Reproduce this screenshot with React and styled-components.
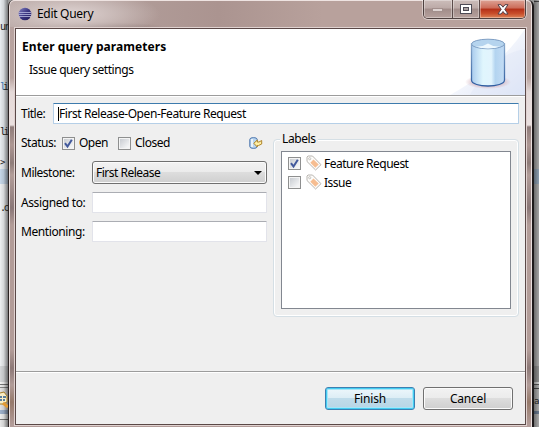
import React from 'react';
import styled, { createGlobalStyle } from 'styled-components';

const GlobalStyle = createGlobalStyle`
  * { box-sizing: border-box; }
  body { margin: 0; overflow: hidden; }
`;

const Desktop = styled.div`
  position: relative;
  width: 539px;
  height: 427px;
  overflow: hidden;
  display: grid;
  grid-template-columns: 8px 526px 5px;
  font: 12px/16px 'Noto Sans', 'Open Sans', sans-serif;
  color: #000;
  background: #999;
`;

const LeftStrip = styled.div`
  position: relative;
  background:
    linear-gradient(90deg, rgba(0,0,0,0) 0%, rgba(0,0,0,.1) 45%, rgba(0,0,0,.5) 100%),
    linear-gradient(#e9edf1 0 169px, #c7d8ea 169px 184px, #eef0f2 184px 366px, #d6d8da 366px 382px, #f4f4f4 382px 384px, #777 384px 385px, #ececec 385px 387px, #888 387px 388px, #e4e4e4 388px 410px, #9fb2cc 410px 414px, #eee 414px 419px, #777 419px 420px, #e8e8e8 420px);
`;

const RightStrip = styled.div`
  position: relative;
  background:
    linear-gradient(90deg, rgba(0,0,0,.35), rgba(0,0,0,0)),
    linear-gradient(#aaa 0 1px, #444 1px 2px, #a5a5a5 2px 169px, #8c9eb0 169px 184px, #a5a5a5 184px 366px, #8d8d8d 366px 382px, #ccc 382px 384px, #555 384px 385px, #aaa 385px 388px, #444 388px 389px, #aaa 389px 411px, #68788d 411px 414px, #aaa 414px);
`;

const CodeBit = styled.span`
  position: absolute;
  top: ${(p) => p.$y}px;
  left: ${(p) => p.$x ?? 0}px;
  font: ${(p) => p.$size ?? 11}px/14px 'DejaVu Sans Mono', monospace;
  letter-spacing: ${(p) => p.$ls ?? -2.6}px;
  color: ${(p) => p.$color || '#222'};
`;

const Frame = styled.div`
  position: relative;
  height: 440px;
  display: flex;
  flex-direction: column;
  align-items: stretch;
  border: 1px solid #2b2323;
  border-top: 0;
  border-right: 2px solid #1d191a;
  border-radius: 6px 6px 0 0;
  box-shadow: inset 1px 1px 0 #eadfde, inset -1px 0 0 #eadfde;
  padding: 0 6px;
  background: linear-gradient(#b5a19e 0, #baa5a1 78px, #e4d9d8 92px, #eae0df 125px, #8f7c7a 127px, #ad9793 145px, #8e7c79 163px, #b29d99 175px, #8a7777 208px, #b29c98 225px, #b29c98 350px, #8d7977 368px, #b19c98 385px, #967a6b 402px, #b29c99 425px);
`;

const TitleBar = styled.div`
  flex: none;
  height: 27px;
  margin: 0 -5px;
  padding-left: 8px;
  display: flex;
  border-top: 1px solid #eee3e1;
  border-radius: 5px 5px 0 0;
  background:
    radial-gradient(ellipse 90px 24px at 60px 13px, rgba(225,214,213,.95), rgba(210,197,195,.7) 50%, transparent),
    radial-gradient(ellipse 75px 6px at 85px 27px, rgba(80,65,65,.35), transparent),
    linear-gradient(90deg, #b8a7a4, #ab9490 40%, #b8a19c 60%, #b8a19c);
`;

const Globe = styled.svg`
  width: 14px;
  height: 14px;
  margin: 6px 5px 0 0;
`;

const Text = styled.span`
  display: block;
  white-space: nowrap;
  letter-spacing: ${(p) => p.$ls ?? -0.5}px;
  font-weight: ${(p) => (p.$bold ? 700 : 400)};
`;

const Caption = styled(Text)`
  margin-top: 5px;
`;

const WindowButtons = styled.div`
  display: flex;
  margin-left: auto;
  margin-right: 5px;
  margin-top: -1px;
  height: 19px;
  border: 1px solid #4f4140;
  border-top: 0;
  border-radius: 0 0 5px 5px;
  box-shadow: 0 0 0 1px rgba(255,255,255,.45);
  overflow: hidden;
`;

const WindowButton = styled.div`
  width: ${(p) => p.$w}px;
  display: flex;
  align-items: center;
  justify-content: center;
  border-left: ${(p) => (p.$first ? '0' : '1px solid #5b4b4a')};
  box-shadow: inset 0 0 0 1px rgba(255,255,255,.35);
  background: ${(p) =>
    p.$close
      ? 'linear-gradient(#dda395 0, #cc6b58 45%, #b32f18 50%, #c84d2a 75%, #dc8458)'
      : 'linear-gradient(#ccbdba 0, #bcaaa7 45%, #a18c89 50%, #b6a19d 100%)'};
`;

const Client = styled.div`
  flex: none;
  width: 511px;
  height: 397px;
  border: 1px solid #5a4847;
  box-shadow: 0 0 0 1px #e0d2d0;
  background: #efefef;
  display: flex;
  flex-direction: column;
  margin-top: 1px;
`;

const Header = styled.div`
  flex: none;
  height: 67px;
  padding: 10px 0 0 6px;
  display: flex;
  justify-content: space-between;
  background: #fff;
  border-bottom: 1px solid #9c9c9c;
`;

const HeaderText = styled.div`
  display: flex;
  flex-direction: column;
  gap: 7px;
  ${Text} + ${Text} { margin-left: 7px; }
`;

const Banner = styled.svg`
  width: 75px;
  height: 66px;
  margin-top: -10px;
`;

const Body = styled.div`
  flex: none;
  height: 275px;
  border-top: 1px solid #fff;
  padding: 6px 5px 0 5px;
`;

const TitleRow = styled.div`
  display: grid;
  grid-template-columns: 32px 466px;
  align-items: center;
  height: 21px;
`;

const Input = styled.div`
  height: 21px;
  display: flex;
  align-items: center;
  padding-left: 4px;
  background: #fff;
  border: 1px solid ${(p) => (p.$focus ? '#b5cfe7' : '#e2e3ea')};
  border-top-color: ${(p) => (p.$focus ? '#3d7bad' : '#abadb3')};
  border-radius: 1px;
`;

const Caret = styled.i`
  width: 1px;
  height: 14px;
  background: #000;
`;

const Columns = styled.div`
  display: grid;
  grid-template-columns: 246px 246px;
  column-gap: 6px;
`;

const StatusRow = styled.div`
  display: flex;
  align-items: center;
  height: 18px;
  margin-top: 10px;
`;

const CheckBoxFrame = styled.span`
  flex: none;
  width: 13px;
  height: 13px;
  margin-right: 4px;
  border: 1px solid #8e8f8f;
  background: linear-gradient(135deg, #c3c7cd, #f3f4f5 80%);
  box-shadow: inset 0 0 0 1px #f4f4f4;
  display: flex;
`;

const StatusOption = styled.span`
  display: flex;
  align-items: center;
  width: ${(p) => p.$w}px;
`;

const Field = styled.div`
  display: grid;
  grid-template-columns: 71px 175px;
  align-items: center;
  margin-top: ${(p) => p.$gap}px;
`;

const Combo = styled.div`
  width: 175px;
  height: 23px;
  display: flex;
  align-items: center;
  justify-content: space-between;
  padding: 0 4px 0 3px;
  border: 1px solid #707070;
  border-radius: 3px;
  box-shadow: inset 0 0 0 1px #fbfbfb;
  background: linear-gradient(#f2f2f2, #ebebeb 49%, #dddddd 50%, #cfcfcf);
`;

const Group = styled.fieldset`
  position: relative;
  margin: 15px 0 0;
  padding: 11px 7px 0;
  width: 246px;
  height: 178px;
  border: 1px solid #d5dfe5;
  border-radius: 4px;
  box-shadow: inset 0 0 0 1px #fff;
`;

const GroupLabel = styled.div`
  position: absolute;
  left: 6px;
  top: -9px;
  padding: 0 2px;
  background: #efefef;
`;

const Tree = styled.div`
  width: 230px;
  height: 158px;
  border: 1px solid #828790;
  background: #fff;
  padding: 2px 0 0 6px;
`;

const TreeRow = styled.div`
  display: flex;
  align-items: center;
  height: 19px;
`;

const Footer = styled.div`
  flex: 1;
  border-top: 1px solid #9c9c9c;
  box-shadow: inset 0 1px 0 #fff;
  padding: 15px 12px 0 0;
  display: flex;
  justify-content: flex-end;
  gap: 8px;
`;

const Button = styled.div`
  width: 90px;
  height: 23px;
  display: flex;
  align-items: center;
  justify-content: center;
  border-radius: 3px;
  border: 1px solid ${(p) => (p.$primary ? '#3c7fb1' : '#707070')};
  box-shadow: ${(p) => (p.$primary ? 'inset 0 0 0 1px #44cdf2, inset 0 0 0 2px #a8e5f7' : 'inset 0 0 0 1px #fbfbfb')};
  background: ${(p) =>
    p.$primary
      ? 'linear-gradient(#eef7fb, #dcedf5 49%, #c0dcea 50%, #b7d5e5)'
      : 'linear-gradient(#f2f2f2, #ebebeb 49%, #dddddd 50%, #cfcfcf)'};
`;

const TagSvg = styled.svg`
  flex: none;
  width: 16px;
  height: 16px;
  margin: -2px 2px 0 1px;
`;

const SmallIcon = styled.svg`
  width: 14px;
  height: 12px;
  margin-left: auto;
  margin-right: 4px;
`;

const SideIcon = styled.svg`
  position: absolute;
  left: 0;
  top: 391px;
`;

const CheckBox = ({ checked }) => (
  <CheckBoxFrame>
    {checked && (
      <svg width="11" height="11" viewBox="0 0 11 11">
        <path d="M2 5.2 L4.5 8.5 L8.8 1.8" fill="none" stroke="#42599c" strokeWidth="2" />
      </svg>
    )}
  </CheckBoxFrame>
);

const Tag = () => (
  <TagSvg viewBox="0 0 16 16">
    <path d="M1 2 L2 1 H6.5 L15 9.7 L9.6 15 L1 6.5 Z" fill="#fdfcfa" stroke="#b9b5b0" />
    <path d="M7.5 4.6 L12.7 9.6 L9.3 12.8 L4.3 7.7 Z" fill="#f6bd91" />
    <circle cx="3.7" cy="3.7" r="1.1" fill="#fff" stroke="#b9b5b0" strokeWidth=".8" />
  </TagSvg>
);

export default function App() {
  return (
    <>
      <GlobalStyle />
      <Desktop>
        <LeftStrip>
          <CodeBit $y={20} $size={10} $ls={-2}>ur</CodeBit>
          <CodeBit $y={80} $size={10} $color="#3c78b5" $ls={-3}>l</CodeBit>
          <CodeBit $y={80} $size={10} $x={3}>i</CodeBit>
          <CodeBit $y={125} $size={10}>li</CodeBit>
          <CodeBit $y={155} $size={9} $ls={-1}>&gt;</CodeBit>
          <CodeBit $y={201} $size={10}>.c</CodeBit>
          <SideIcon width="8" height="18" viewBox="0 0 8 18">
            <path d="M0 2 L4 1 L7 5 L7 11 L3 13 L0 13" fill="#f8edc4" stroke="#a47c25" />
            <path d="M0 6 H2 M0 9 H2 M3 6 H6 M3 9 H5" stroke="#255b91" strokeWidth="1.4" />
            <path d="M3 12 L8 16" stroke="#e19a34" strokeWidth="3" />
          </SideIcon>
        </LeftStrip>
        <Frame>
          <TitleBar>
            <Globe viewBox="0 0 14 14">
              <defs>
                <linearGradient id="globe" x1="0" y1="0" x2="1" y2="1">
                  <stop offset="0" stopColor="#8684c4" />
                  <stop offset=".5" stopColor="#3b3682" />
                  <stop offset="1" stopColor="#211b58" />
                </linearGradient>
              </defs>
              <circle cx="7" cy="7" r="6.3" fill="url(#globe)" />
              <path d="M.8 5.5H13.2M.5 7.5H13.5M1 9.5H13" stroke="#b9bbe2" strokeWidth=".8" />
            </Globe>
            <Caption $ls={-0.3}>Edit Query</Caption>
            <WindowButtons>
              <WindowButton $w={28} $first>
                <svg width="12" height="6"><rect x=".5" y="2.5" width="10" height="3" fill="#ddd2d0" stroke="#a28f8c" /></svg>
              </WindowButton>
              <WindowButton $w={27}>
                <svg width="12" height="10">
                  <rect x=".5" y=".5" width="11" height="9" fill="#fff" stroke="#4d4b55" />
                  <rect x="3.5" y="3.5" width="5" height="3" fill="#aaa0a0" stroke="#4d4b55" />
                </svg>
              </WindowButton>
              <WindowButton $w={46} $close>
                <svg width="12" height="11" viewBox="0 0 12 11">
                  <path d="M1 .7H4L6 3.2 8 .7H11L7.8 5.3 11 10H8L6 7.5 4 10H1L4.2 5.3Z" fill="#fff" stroke="#514049" strokeWidth="1" />
                </svg>
              </WindowButton>
            </WindowButtons>
          </TitleBar>
          <Client>
            <Header>
              <HeaderText>
                <Text $bold $ls={0.06}>Enter query parameters</Text>
                <Text $ls={-0.45}>Issue query settings</Text>
              </HeaderText>
              <Banner viewBox="0 0 75 66">
                <defs>
                  <linearGradient id="sky" x1="0" y1="0" x2="1" y2="1">
                    <stop offset=".25" stopColor="#fff" />
                    <stop offset="1" stopColor="#dbe3f6" />
                  </linearGradient>
                  <linearGradient id="can">
                    <stop offset="0" stopColor="#a9cbed" />
                    <stop offset=".35" stopColor="#e0f6fd" />
                    <stop offset=".6" stopColor="#e2f4fd" />
                    <stop offset=".72" stopColor="#b3d4f0" />
                    <stop offset="1" stopColor="#c3dcf5" />
                  </linearGradient>
                  <linearGradient id="rim" x1="0" y1="0" x2="0" y2="1">
                    <stop offset="0" stopColor="#8baacb" />
                    <stop offset="1" stopColor="#2e5ca0" />
                  </linearGradient>
                  <radialGradient id="shade">
                    <stop offset=".7" stopColor="#d9bcc5" />
                    <stop offset="1" stopColor="#d9bcc5" stopOpacity="0" />
                  </radialGradient>
                </defs>
                <path d="M0 66 Q50 38 75 0 V66Z" fill="url(#sky)" />
                <path d="M20 66 Q42 25 75 20 V66Z" fill="#dfe6f7" opacity=".45" />
                <ellipse cx="38" cy="53" rx="23" ry="7" fill="url(#shade)" opacity=".7" />
                <path d="M21.5 15 V51 C21.5 59 54.5 59 54.5 51 V15Z" fill="url(#can)" stroke="url(#rim)" strokeWidth="1.3" />
                <ellipse cx="38" cy="15" rx="16.5" ry="4.8" fill="#b5d4ee" stroke="#7f9fc4" />
                <path d="M24 17 Q31 19 38 14.5 Q45 19 52 17 Q38 22 24 17Z" fill="#eef9fe" />
              </Banner>
            </Header>
            <Body>
              <TitleRow>
                <Text>Title:</Text>
                <Input $focus>
                  <Caret />
                  <Text $ls={-0.43}>First Release-Open-Feature Request</Text>
                </Input>
              </TitleRow>
              <Columns>
                <div>
                  <StatusRow>
                    <StatusOption $w={41}><Text>Status:</Text></StatusOption>
                    <StatusOption $w={56}><CheckBox checked /><Text>Open</Text></StatusOption>
                    <StatusOption $w={60}><CheckBox /><Text>Closed</Text></StatusOption>
                    <SmallIcon viewBox="0 0 14 12">
                      <path d="M.8 2.5 C.8 0 8.2 0 8.2 2.5 V9.5 C8.2 12 .8 12 .8 9.5Z" fill="#b9d5ef" stroke="#4973ac" />
                      <path d="M3 2V10" stroke="#fff" strokeWidth="1.4" />
                      <path d="M4.8 6.3 L8.3 3 V5 H10 L12.7 3.5 V7 L9.5 8.5 H8.3 V10Z" fill="#fff0a3" stroke="#ae842c" />
                    </SmallIcon>
                  </StatusRow>
                  <Field $gap={9}>
                    <Text>Milestone:</Text>
                    <Combo>
                      <Text>First Release</Text>
                      <svg width="8" height="4"><path d="M0 0H8L4 4Z" fill="#000" /></svg>
                    </Combo>
                  </Field>
                  <Field $gap={8}><Text $ls={-0.4}>Assigned to:</Text><Input /></Field>
                  <Field $gap={8}><Text $ls={-0.4}>Mentioning:</Text><Input /></Field>
                </div>
                <Group>
                  <GroupLabel><Text $ls={-0.4}>Labels</Text></GroupLabel>
                  <Tree>
                    <TreeRow><CheckBox checked /><Tag /><Text>Feature Request</Text></TreeRow>
                    <TreeRow><CheckBox /><Tag /><Text>Issue</Text></TreeRow>
                  </Tree>
                </Group>
              </Columns>
            </Body>
            <Footer>
              <Button $primary><Text $ls={-0.2}>Finish</Text></Button>
              <Button><Text $ls={-0.2}>Cancel</Text></Button>
            </Footer>
          </Client>
        </Frame>
        <RightStrip>
          <CodeBit $y={394} $size={9}>a</CodeBit>
        </RightStrip>
      </Desktop>
    </>
  );
}
